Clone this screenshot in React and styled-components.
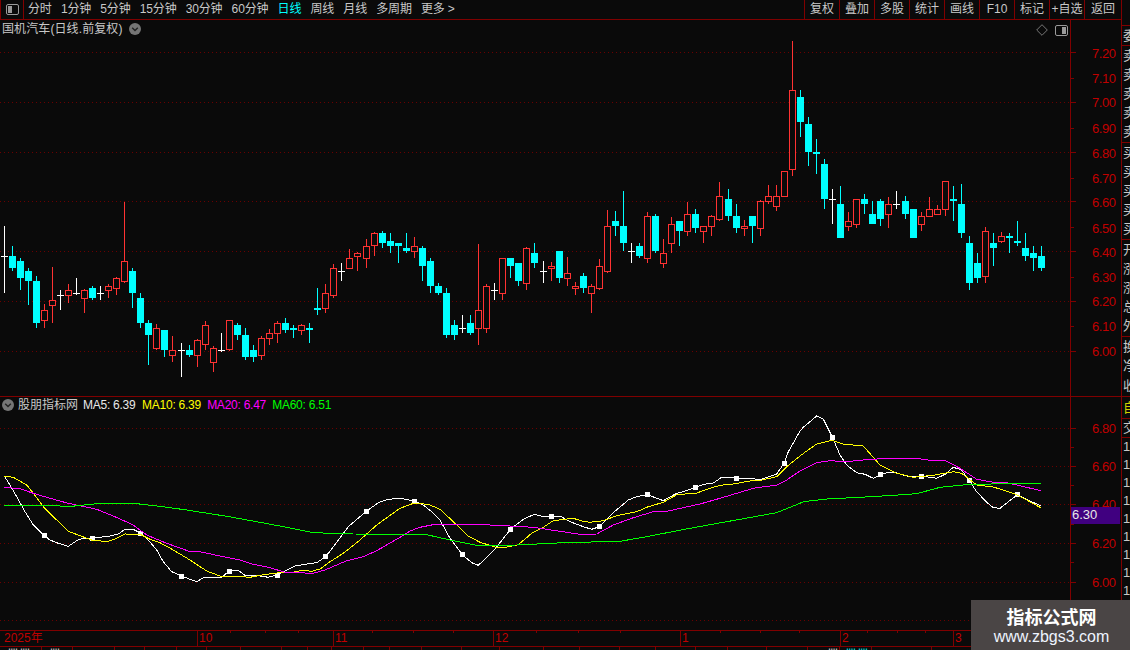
import React from "react";
import styled, { createGlobalStyle } from "styled-components";

const RED_LINE = "#800000";
const AXIS_TEXT = "#c00000";
const BG = "#0a0a0a";
const FONT = `"Liberation Sans", "Noto Sans CJK SC", sans-serif`;

const Global = createGlobalStyle`
  html, body { margin: 0; padding: 0; background: ${BG}; overflow: hidden; }
  * { box-sizing: border-box; }
`;

const Page = styled.div`
  width: 1130px; height: 650px; display: flex; position: relative; overflow: hidden;
  background: ${BG}; font-family: ${FONT}; font-size: 12px; color: #c8c8c8;
`;
const LeftColumn = styled.div`width: 1121px; height: 650px; display: flex; flex-direction: column;`;

/* top bar */
const TopBar = styled.div`
  height: 20px; flex: none; display: flex; align-items: center; border-bottom: 1px solid ${RED_LINE};
`;
const PanelButton = styled.div`
  width: 24px; height: 19px; flex: none; display: flex; align-items: center; justify-content: center;
  border-left: 1px solid ${RED_LINE}; border-right: 1px solid ${RED_LINE};
`;
const Tabs = styled.div`display: flex; gap: 9.2px; margin-left: 4px; line-height: 19px; letter-spacing: -0.15px;`;
const Tab = styled.span`color: ${(p) => (p.$active ? "#00ffff" : "#c8c8c8")}; white-space: nowrap;`;
const Tools = styled.div`margin-left: auto; display: flex; height: 19px;`;
const Tool = styled.div`
  width: ${(p) => p.$w || 35}px; height: 19px; line-height: 18px; text-align: center; white-space: nowrap;
  border-left: 1px solid ${RED_LINE};
`;

/* panes */
const MainPane = styled.div`
  height: 377px; flex: none; position: relative; border-bottom: 1px solid ${RED_LINE};
`;
const SubPane = styled.div`height: 233px; flex: none; position: relative;`;
const ChartSvg = styled.svg`position: absolute; left: 0; top: 0; display: block;`;
const PaneHeader = styled.div`
  position: absolute; left: 2px; top: ${(p) => p.$top}px; display: flex; align-items: center; gap: ${(p) => p.$gap}px;
  line-height: 16px; white-space: nowrap;
`;
const TitleText = styled.span`letter-spacing: 0.1px;`;
const Legend = styled.span`color: ${(p) => p.$c}; margin-left: ${(p) => p.$ml}px; letter-spacing: -0.25px;`;
const CornerIcons = styled.div`
  position: absolute; left: 1036px; top: 4px; display: flex; align-items: center; gap: 7px;
`;
const PriceTag = styled.div`
  position: absolute; left: 1071px; top: 110px; width: 49px; height: 17px; padding-left: 1px;
  background: #400080; color: #e8e8e8; font-size: 13px; line-height: 16px;
`;

/* time axis */
const TimeAxis = styled.div`
  height: 17px; flex: none; display: flex; position: relative;
  border-top: 1px solid ${RED_LINE}; border-bottom: 1px solid ${RED_LINE};
`;
const TimeCell = styled.div`
  width: ${(p) => p.$w}px; flex: none; height: 15px; line-height: 15px; padding-left: ${(p) => p.$pad || 1}px;
  color: ${AXIS_TEXT}; font-size: 12px; white-space: nowrap;
  border-left: ${(p) => (p.$first ? "none" : `1px solid ${RED_LINE}`)};
`;
const Notches = styled.svg`position: absolute; left: 0; top: 0;`;

/* clipped status line */
const StatusRow = styled.div`height: 3px; flex: none; display: flex; overflow: hidden;`;
const StatusCell = styled.div`
  width: ${(p) => p.$w}px; flex: none; height: 16px; padding: 1px 0 0 ${(p) => p.$pad || 0}px; line-height: 14px; white-space: nowrap;
  color: ${(p) => p.$c || "#e0e0e0"}; border-right: 1px solid ${RED_LINE};
`;

/* right strip */
const Strip = styled.div`
  width: 9px; flex: none; height: 650px; display: flex; flex-direction: column; overflow: hidden;
  border-left: 1px solid ${RED_LINE};
`;
const StripBlock = styled.div`
  height: ${(p) => p.$h}px; flex: none; display: flex; flex-direction: column; justify-content: space-around;
  padding-left: 1px; font-size: 13px; line-height: ${(p) => p.$lh || 16}px; white-space: nowrap;
  color: ${(p) => p.$c || "#c8c8c8"}; border-bottom: ${(p) => (p.$open ? "none" : `1px solid ${RED_LINE}`)};
`;
const StripRow = styled.div`width: 40px;`;

const Watermark = styled.div`
  position: absolute; left: 971px; top: 600px; width: 159px; height: 50px; background: #4a4545;
  display: flex; flex-direction: column; align-items: center; color: #fff; padding-left: 2px;
`;
const WatermarkTitle = styled.div`
  font-size: 18px; font-weight: 700; line-height: 22px; margin-top: 5px; font-family: "Noto Sans CJK SC", sans-serif;
`;
const WatermarkUrl = styled.div`font-size: 16px; line-height: 18px; margin-top: 1px; color: #eef4ff; font-family: "Liberation Sans", sans-serif;`;

/* ---- data ---- */
const candles = [
  [226,256,256,293,"w"],[246,256,268,271,"c"],[258,261,278,290,"c"],[268,271,281,305,"c"],[276,281,323,328,"c"],
  [304,310,321,328,"r"],[267,300,306,323,"r"],[290,295,295,310,"w"],[284,290,296,303,"r"],[278,293,293,295,"w"],
  [289,290,299,313,"r"],[286,288,298,300,"c"],[286,293,293,300,"w"],[284,286,291,298,"r"],[277,278,289,295,"r"],
  [202,261,282,283,"r"],[268,271,293,308,"c"],[293,298,323,328,"c"],[320,323,335,365,"c"],[324,328,349,350,"r"],
  [330,330,350,357,"c"],[336,350,356,362,"r"],[343,350,350,377,"w"],[345,350,355,357,"c"],[339,340,356,367,"r"],
  [321,325,345,350,"r"],[346,348,363,372,"r"],[333,350,350,352,"w"],[320,320,350,351,"r"],[323,325,335,340,"c"],
  [328,335,357,360,"c"],[345,350,357,362,"c"],[336,338,356,360,"r"],[329,333,339,345,"r"],[321,323,334,343,"r"],
  [318,323,330,333,"c"],[325,328,330,338,"c"],[324,325,331,335,"r"],[323,328,330,343,"c"],[288,308,310,315,"c"],
  [284,293,309,313,"r"],[264,268,296,298,"r"],[263,271,271,281,"w"],[249,258,269,269,"r"],[252,253,257,271,"r"],
  [239,246,259,268,"r"],[232,233,246,256,"r"],[231,233,243,248,"c"],[233,241,246,253,"c"],[243,243,246,263,"c"],
  [233,248,251,253,"c"],[237,246,252,258,"r"],[246,248,266,281,"c"],[258,261,286,293,"c"],[283,286,293,295,"c"],
  [288,293,335,338,"c"],[320,325,335,340,"c"],[315,328,328,333,"w"],[315,323,333,335,"c"],[244,310,329,345,"r"],
  [284,286,329,333,"r"],[283,290,290,300,"w"],[258,258,294,300,"r"],[258,258,266,278,"c"],[263,263,281,286,"c"],
  [247,248,284,290,"r"],[243,253,263,268,"c"],[261,271,271,283,"w"],[262,266,269,281,"r"],[251,251,278,283,"c"],
  [257,273,279,286,"r"],[282,286,289,295,"r"],[273,276,288,293,"c"],[284,286,294,313,"r"],[259,266,289,290,"r"],
  [210,226,272,273,"r"],[211,221,226,236,"c"],[191,226,243,251,"c"],[243,251,251,263,"w"],[243,246,256,258,"c"],
  [212,216,259,263,"r"],[214,216,251,253,"c"],[239,253,264,268,"r"],[217,224,244,253,"r"],[221,221,231,246,"c"],
  [202,214,232,236,"r"],[209,214,228,233,"c"],[226,226,232,243,"r"],[215,216,227,236,"r"],[182,196,220,221,"r"],
  [189,199,216,221,"c"],[204,216,228,233,"c"],[220,226,229,236,"r"],[216,216,226,243,"c"],[200,201,229,236,"r"],
  [185,196,202,204,"r"],[185,196,207,211,"r"],[171,171,197,197,"r"],[41,90,170,176,"r"],[90,97,122,137,"c"],
  [117,124,152,166,"c"],[139,152,154,174,"c"],[159,164,199,209,"c"],[189,199,199,224,"w"],[186,204,238,238,"c"],
  [212,221,227,231,"r"],[199,199,225,228,"r"],[194,199,204,214,"c"],[201,214,224,224,"c"],[199,201,219,226,"c"],
  [197,204,215,228,"r"],[191,204,204,209,"w"],[196,201,214,219,"c"],[209,209,238,238,"c"],[212,216,225,231,"r"],
  [197,209,217,217,"r"],[205,209,215,215,"r"],[181,181,210,216,"r"],[186,199,201,221,"c"],[184,204,233,238,"c"],
  [236,243,283,290,"c"],[253,263,278,283,"c"],[227,231,277,283,"r"],[233,243,248,266,"c"],[232,236,242,243,"r"],
  [233,236,238,253,"c"],[221,241,243,246,"c"],[233,248,256,261,"c"],[246,253,258,271,"c"],[246,256,268,271,"c"],
];
const candleX = (i) => 4 + 8 * i + Math.floor((i + 1) / 22.51);

// points read at 3x from three crops of the lower chart, then mapped back to page pixels
const crop = (ox, oy, flat, min, max) => {
  const out = [];
  for (let i = 0; i < flat.length; i += 2) {
    const x = ox + flat[i] / 3;
    if (x >= min && x <= max) out.push(`${x.toFixed(1)},${(oy + flat[i + 1] / 3).toFixed(1)}`);
  }
  return out;
};
const series = (a, b, c) =>
  [...crop(0, 390, a, 0, 400), ...crop(400, 450, b, 400.1, 800), ...crop(760, 395, c, 800.1, 1100)].join(" ");

const whiteLine = series(
  [13,258,30,285,50,320,75,365,100,405,133,437,150,450,175,460,205,469,230,452,250,444,278,444,305,441,330,438,355,432,375,418,400,418,422,430,445,450,470,480,490,515,515,545,545,558,570,568,590,575,612,562,665,562,688,543,715,541,735,556,775,557,805,562,832,555,860,540,885,528,915,523,950,518,977,500,1000,470,1045,410,1100,363,1135,338,1165,328,1200,325],
  [0,145,43,153,70,165,95,185,120,210,150,265,187,314,215,338,235,346,260,322,285,297,332,237,370,208,403,193,425,199,455,198,480,198,510,215,550,230,575,238,598,230,640,188,685,150,710,140,742,134,790,152,830,130,850,125,886,113,910,103,940,99,965,82,1009,84,1045,86,1085,88,1130,72,1153,39,1165,5,1185,-30,1200,-57],
  [120,110,130,97,170,63,190,72,217,126,240,180,260,210,290,233,315,238,340,250,362,239,385,232,410,234,440,243,485,243,530,250,555,238,580,217,605,225,628,257,650,290,680,322,700,338,720,340,772,299,810,318,842,332]
);
const yellowLine = series(
  [13,258,40,262,80,285,100,310,130,350,170,390,205,424,240,437,280,452,325,454,350,445,375,432,420,433,450,448,480,458,520,480,570,510,620,543,660,558,700,558,750,562,780,556,830,549,880,547,905,541,935,544,960,537,990,515,1030,490,1080,450,1130,405,1165,380,1200,355],
  [0,170,40,160,85,163,120,178,165,220,205,258,240,277,285,291,320,291,355,284,395,250,430,232,460,212,520,205,545,213,570,217,610,212,650,197,710,185,745,170,790,157,830,134,890,129,930,115,960,106,1000,102,1050,93,1085,90,1130,80,1160,50,1200,18],
  [140,168,170,147,217,136,250,147,310,153,360,210,410,235,460,247,520,241,580,230,605,235,650,270,700,276,760,295,800,315,842,338]
);
const magentaLine = series(
  [13,292,60,296,100,310,150,325,205,340,290,358,340,378,400,405,440,435,500,460,565,483,600,485,660,498,720,510,760,523,810,533,855,547,940,550,975,540,1040,512,1090,500,1130,482,1200,442],
  [0,262,30,243,60,232,105,223,250,224,330,228,400,232,480,244,540,253,590,252,640,225,700,203,760,185,800,184,900,162,960,145,1060,115,1130,105,1160,90,1200,63],
  [120,225,170,203,210,197,260,200,330,193,400,190,470,190,510,196,555,196,600,220,650,253,700,262,740,263,780,272,842,287]
);
const greenLine = series(
  [13,346,100,346,215,349,290,341,410,341,480,349,560,360,680,379,770,395,860,412,940,428,1060,432,1200,433],
  [0,253,80,254,150,270,230,286,350,285,490,278,660,274,730,262,870,235,1020,208,1130,188,1200,160],
  [130,320,210,311,280,308,400,301,470,296,540,277,610,270,720,266,842,265]
);
const squares = [
  ...[[133,437],[278,444],[422,430],[545,558],[688,543],[832,555],[977,500],[1100,363]].map(([x,y]) => [x/3, 390+y/3]),
  ...[[43,153],[187,314],[332,237],[455,198],[598,230],[742,134],[886,113],[1009,84],[1153,39]].map(([x,y]) => [400+x/3, 450+y/3]),
  ...[[217,126],[362,239],[485,243],[628,257],[772,299]].map(([x,y]) => [760+x/3, 395+y/3]),
];

const mainLabels = [["7.20",52.5,1],["7.10",78,0],["7.00",102,1],["6.90",128,0],["6.80",152.5,1],["6.70",178,0],["6.60",201.5,1],["6.50",227.5,0],["6.40",251.5,1],["6.30",277,0],["6.20",301,1],["6.10",326,0],["6.00",351,1]];
const subLabels = [["6.80",428],["6.60",466],["6.40",504],["6.20",543],["6.00",582]];
const subMinor = [447,485,524,562,601];
const subGrid = [428,466,504,543,582,620];

const tabs = ["分时","1分钟","5分钟","15分钟","30分钟","60分钟","日线","周线","月线","多周期","更多 >"];
const tools = ["复权","叠加","多股","统计","画线","F10","标记","+自选","返回"];
const notchX = [230,265,298,372,413,453,536,578,620,720,760,799,867,897,925,1000];
const statusCells = [
  { w: 42, pad: 7, t: "卌卌" }, { w: 31, pad: 7, t: "卌" }, { w: 42 }, { w: 30 }, { w: 32 }, { w: 30 }, { w: 34 }, { w: 41 },
  { w: 26 }, { w: 24 }, { w: 32 }, { w: 26 }, { w: 32 }, { w: 40 }, { w: 38 }, { w: 44 }, { w: 36 }, { w: 40 }, { w: 36 },
  { w: 40 }, { w: 32 }, { w: 39 }, { w: 41 }, { w: 32, pad: 19, t: "卌" }, { w: 32, pad: 5, t: "卌卌", c: "#00ffff" }, { w: 60 }, { w: 60 }, { w: 60 },
];

const Candle = ({ c, i }) => {
  const [hi, top, bot, lo, kind] = c;
  const x = candleX(i);
  if (kind === "w")
    return <g fill="#ffffff"><rect x={x} y={hi} width="1" height={lo - hi} /><rect x={x - 3} y={top} width="7" height="1" /></g>;
  if (kind === "c")
    return <g fill="#00ffff"><rect x={x} y={hi} width="1" height={lo - hi} /><rect x={x - 3} y={top} width="7" height={Math.max(bot - top, 2)} /></g>;
  return (
    <g>
      <rect x={x} y={hi} width="1" height={lo - hi} fill="#ff3232" />
      <rect x={x - 2.5} y={top + 0.5} width="6" height={Math.max(bot - top - 1, 1)} fill={BG} stroke="#ff3232" strokeWidth="1" />
    </g>
  );
};

const Grid = ({ ys }) => ys.map((y) => (
  <line key={y} x1="0" x2="1070" y1={y + 0.5} y2={y + 0.5} stroke="#6a0000" strokeWidth="1" strokeDasharray="1 3" shapeRendering="crispEdges" />
));
const AxisText = ({ y, children }) => (
  <text x="1092" y={y + 5} fill={AXIS_TEXT} fontSize="13" letterSpacing="-0.4" fontFamily="Liberation Sans, sans-serif">{children}</text>
);

const PanelIcon = ({ side }) => (
  <svg width="13" height="11" viewBox="0 0 13 11">
    <rect x="0.5" y="0.5" width="12" height="10" rx="1.5" fill="#0a0a0a" stroke="#9a9a9a" />
    <rect x={side === "left" ? 2 : 7} y="2" width="4" height="7" fill="#9a9a9a" />
  </svg>
);
const DownBadge = () => (
  <svg width="12" height="12" viewBox="0 0 12 12">
    <circle cx="6" cy="6" r="6" fill="#757575" />
    <path d="M3.2 4.8 L6 7.6 L8.8 4.8" fill="none" stroke="#222" strokeWidth="1.4" />
  </svg>
);

export default function App() {
  return (
    <Page>
      <Global />
      <LeftColumn>
        <TopBar>
          <PanelButton><PanelIcon side="left" /></PanelButton>
          <Tabs>{tabs.map((t) => <Tab key={t} $active={t === "日线"}>{t}</Tab>)}</Tabs>
          <Tools>{tools.map((t) => <Tool key={t} $w={t === "返回" ? 37 : 35}>{t}</Tool>)}</Tools>
        </TopBar>

        <MainPane>
          <ChartSvg width="1121" height="376" viewBox="0 20 1121 376">
            <Grid ys={mainLabels.filter((l) => l[2]).map((l) => Math.floor(l[1]))} />
            <g shapeRendering="crispEdges">
              <rect x="1070" y="20" width="1" height="376" fill={RED_LINE} />
              {mainLabels.map(([t, y, major]) => (
                <rect key={t} x="1071" y={Math.floor(y)} width={major ? 5 : 3} height="1" fill={RED_LINE} />
              ))}
              {candles.map((c, i) => <Candle key={i} c={c} i={i} />)}
            </g>
            {mainLabels.map(([t, y]) => <AxisText key={t} y={y}>{t}</AxisText>)}
          </ChartSvg>
          <PaneHeader $top={1} $gap={6}>
            <TitleText>国机汽车(日线.前复权)</TitleText>
            <DownBadge />
          </PaneHeader>
          <CornerIcons>
            <svg width="12" height="12" viewBox="0 0 12 12">
              <path d="M6 .7 L11.3 6 L6 11.3 L.7 6 Z" fill="none" stroke="#777" />
            </svg>
            <PanelIcon side="right" />
          </CornerIcons>
        </MainPane>

        <SubPane>
          <ChartSvg width="1121" height="233" viewBox="0 397 1121 233">
            <Grid ys={subGrid} />
            <g shapeRendering="crispEdges">
              <rect x="1070" y="397" width="1" height="233" fill={RED_LINE} />
              {subLabels.map(([t, y]) => <rect key={t} x="1071" y={y} width="5" height="1" fill={RED_LINE} />)}
              {subMinor.map((y) => <rect key={y} x="1071" y={y} width="3" height="1" fill={RED_LINE} />)}
              <polyline points={whiteLine} fill="none" stroke="#ffffff" strokeWidth="1" />
              {squares.map(([x, y], i) => <rect key={i} x={Math.round(x - 2.5)} y={Math.round(y - 2.5)} width="5" height="5" fill="#ffffff" />)}
              <polyline points={yellowLine} fill="none" stroke="#ffff00" strokeWidth="1" />
              <polyline points={magentaLine} fill="none" stroke="#ff00ff" strokeWidth="1" />
              <polyline points={greenLine} fill="none" stroke="#00ff00" strokeWidth="1" />
            </g>
            {subLabels.map(([t, y]) => <AxisText key={t} y={y}>{t}</AxisText>)}
          </ChartSvg>
          <PaneHeader $top={0} $gap={4}>
            <DownBadge />
            <span>股朋指标网</span>
            <Legend $c="#e8e8e8" $ml={1}>MA5: 6.39</Legend>
            <Legend $c="#ffff00" $ml={2.6}>MA10: 6.39</Legend>
            <Legend $c="#ff00ff" $ml={2.2}>MA20: 6.47</Legend>
            <Legend $c="#00ff00" $ml={2.2}>MA60: 6.51</Legend>
          </PaneHeader>
          <PriceTag>6.30</PriceTag>
        </SubPane>

        <TimeAxis>
          <TimeCell $first $w={197} $pad={4}>2025年</TimeCell>
          <TimeCell $w={136}>10</TimeCell>
          <TimeCell $w={160}>11</TimeCell>
          <TimeCell $w={187}>12</TimeCell>
          <TimeCell $w={160}>1</TimeCell>
          <TimeCell $w={113}>2</TimeCell>
          <TimeCell $w={168}>3</TimeCell>
          <Notches width="1121" height="3">
            {notchX.map((x) => <rect key={x} x={x} y="0" width="1" height="2" fill={RED_LINE} />)}
          </Notches>
        </TimeAxis>

        <StatusRow>
          {statusCells.map((s, i) => <StatusCell key={i} $w={s.w} $pad={s.pad} $c={s.c}>{s.t}</StatusCell>)}
        </StatusRow>
      </LeftColumn>

      <Strip>
        <StripBlock $h={26} />
        <StripBlock $h={20}><StripRow>委比</StripRow></StripBlock>
        <StripBlock $h={97}>{["卖五","卖四","卖三","卖二","卖一"].map((t) => <StripRow key={t}>{t}</StripRow>)}</StripBlock>
        <StripBlock $h={97}>{["买一","买二","买三","买四","买五"].map((t) => <StripRow key={t}>{t}</StripRow>)}</StripBlock>
        <StripBlock $h={97}>{["开盘","涨跌","涨幅","总量","外盘"].map((t) => <StripRow key={t}>{t}</StripRow>)}</StripBlock>
        <StripBlock $h={60}>{["换手","净资","收益"].map((t) => <StripRow key={t}>{t}</StripRow>)}</StripBlock>
        <StripBlock $h={22} $c="#d0d000"><StripRow>自选</StripRow></StripBlock>
        <StripBlock $h={19}><StripRow>交易</StripRow></StripBlock>
        <StripBlock $h={162} $open>
          {[447,465,482,500,518,537,555,573,590].map((y) => <StripRow key={y}>1</StripRow>)}
        </StripBlock>
      </Strip>

      <Watermark>
        <WatermarkTitle>指标公式网</WatermarkTitle>
        <WatermarkUrl>www.zbgs3.com</WatermarkUrl>
      </Watermark>
    </Page>
  );
}
